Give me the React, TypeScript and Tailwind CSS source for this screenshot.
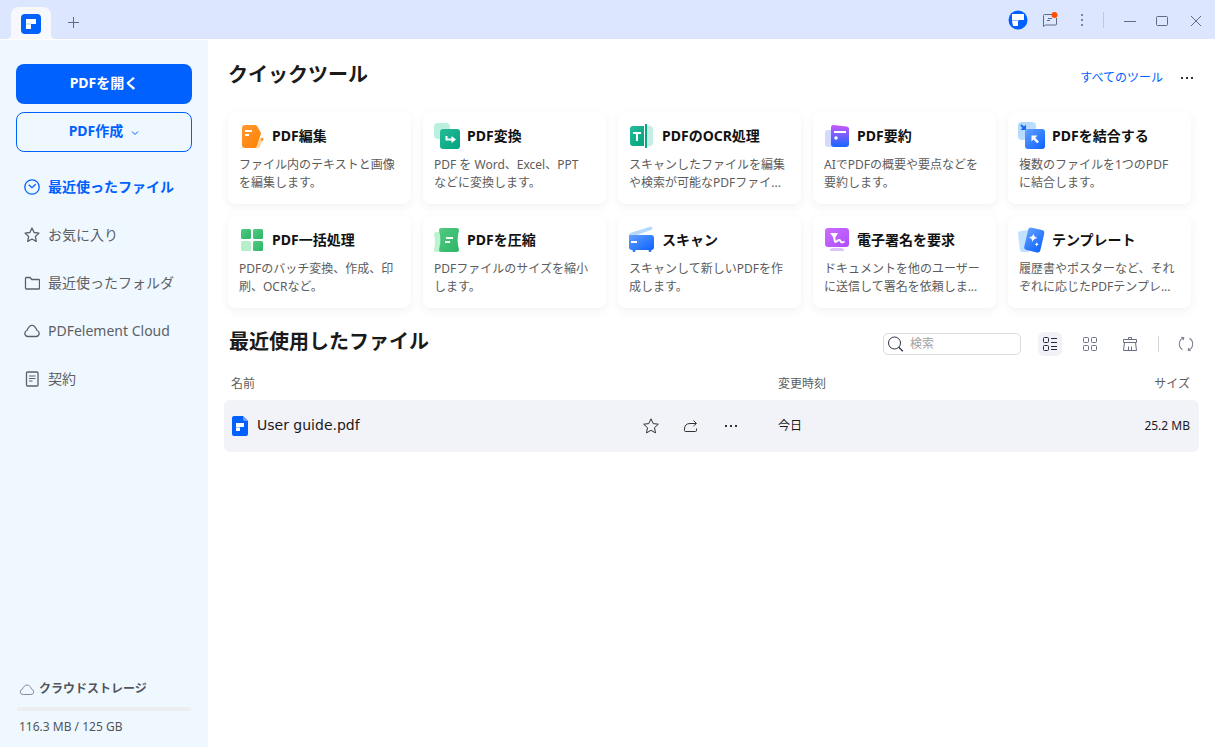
import type { ReactNode } from 'react';

const defs = (
  <svg width="0" height="0" className="absolute" aria-hidden="true">
    <defs>
      <linearGradient id="orange" x1="0" y1="0" x2="1" y2="1"><stop stopColor="#ff9a33" /><stop offset="1" stopColor="#ff8000" /></linearGradient>
      <linearGradient id="teal" x1="0" y1="0" x2="1" y2="1"><stop stopColor="#27bb98" /><stop offset="1" stopColor="#00a481" /></linearGradient>
      <linearGradient id="mint" x1="0" y1="0" x2="1" y2="1"><stop stopColor="#b5f0dc" /><stop offset="1" stopColor="#c4eee2" /></linearGradient>
      <linearGradient id="green" x1="0" y1="0" x2="1" y2="1"><stop stopColor="#4fcb81" /><stop offset="1" stopColor="#2eb568" /></linearGradient>
      <linearGradient id="blue" x1="0" y1="0" x2="1" y2="1"><stop stopColor="#63a0ff" /><stop offset="1" stopColor="#0a62ff" /></linearGradient>
      <linearGradient id="sky" x1="0" y1="0" x2="1" y2="1"><stop stopColor="#aed7fb" /><stop offset="1" stopColor="#c6e3ff" /></linearGradient>
      <linearGradient id="violet" x1="0" y1="0" x2="0" y2="1"><stop stopColor="#cb58fb" /><stop offset="1" stopColor="#1666ff" /></linearGradient>
      <linearGradient id="purple" x1="0" y1="0" x2="1" y2="1"><stop stopColor="#c96dff" /><stop offset="1" stopColor="#b14dfb" /></linearGradient>
    </defs>
  </svg>
);

const tools: { title: string; lines: [string, string]; icon: ReactNode }[] = [
  {
    title: 'PDF編集',
    lines: ['ファイル内のテキストと画像', 'を編集します。'],
    icon: (
      <>
        <path d="M22.500 15l2.500 1.200-4.500 9.300-3.500 1 .5-4z" fill="#ffd6a3" />
        <path d="M6 3h10c.8 0 1.500.4 2 1l3.700 6.500c.3.600.3 1.200.1 1.800L17.500 24.800c-.4.800-1 1.200-1.800 1.200H6a3 3 0 0 1-3-3V6a3 3 0 0 1 3-3z" fill="url(#orange)" />
        <circle cx="23" cy="17.500" r="1.300" fill="#ff8a12" />
        <path d="M6 9h7M6 13h4" stroke="#fff" strokeWidth="2" />
      </>
    ),
  },
  {
    title: 'PDF変換',
    lines: ['PDF を Word、Excel、PPT', 'などに変換します。'],
    icon: (
      <>
        <rect x="0" y="1" width="16" height="16" rx="4" fill="url(#mint)" />
        <rect x="6" y="7" width="20" height="20" rx="3" fill="url(#teal)" />
        <path d="M12.500 14v3.500h6" fill="none" stroke="#fff" strokeWidth="2" />
        <path d="M17.500 14l4.500 3.500-4.500 3.500z" fill="#fff" />
      </>
    ),
  },
  {
    title: 'PDFのOCR処理',
    lines: ['スキャンしたファイルを編集', 'や検索が可能なPDFファイ...'],
    icon: (
      <>
        <path d="M4 4h11v20H4a3 3 0 0 1-3-3V7a3 3 0 0 1 3-3z" fill="url(#teal)" />
        <path d="M18 4h3a3 3 0 0 1 3 3v14a3 3 0 0 1-3 3h-3z" fill="#c4eee2" />
        <path d="M15 3h1v22h-1z" fill="#fff" />
        <path d="M16 2h2v24h-2z" fill="#08a684" />
        <path d="M4 11h8M8 10v9" stroke="#fff" strokeWidth="2" />
      </>
    ),
  },
  {
    title: 'PDF要約',
    lines: ['AIでPDFの概要や要点などを', '要約します。'],
    icon: (
      <>
        <path d="M4 8h5v17H4a3 3 0 0 1-3-3V11a3 3 0 0 1 3-3z" fill="#d3daff" />
        <path d="M9.500 3l13 1.500C24 4.700 25 5.500 25 7v15a3 3 0 0 1-3 3H10a3 3 0 0 1-3-3V5.500C7 4 8 2.900 9.500 3z" fill="url(#violet)" />
        <path d="M10 10h12" stroke="#fff" strokeWidth="2" />
        <circle cx="12" cy="16" r="1.800" fill="#fff" />
      </>
    ),
  },
  {
    title: 'PDFを結合する',
    lines: ['複数のファイルを1つのPDF', 'に結合します。'],
    icon: (
      <>
        <rect x="-1" y="0" width="18" height="18" rx="4" fill="url(#sky)" />
        <path d="M2 3l4 4" stroke="#1769f5" strokeWidth="2" />
        <path d="M7 2.500V8H1.500z" fill="#1769f5" />
        <rect x="6" y="7" width="20" height="20" rx="3" fill="url(#blue)" />
        <path d="M14 15l5 5.500" stroke="#fff" strokeWidth="2.500" />
        <path d="M12.500 13.500h6l-6 6z" fill="#fff" />
      </>
    ),
  },
  {
    title: 'PDF一括処理',
    lines: ['PDFのバッチ変換、作成、印', '刷、OCRなど。'],
    icon: (
      <>
        <rect x="2" y="3" width="10" height="10" rx="1.500" fill="url(#green)" />
        <rect x="14" y="3" width="10" height="10" rx="1.500" fill="url(#green)" />
        <rect x="2" y="15" width="10" height="10" rx="1.500" fill="#b6f0ca" />
        <rect x="14" y="15" width="10" height="10" rx="1.500" fill="url(#green)" />
      </>
    ),
  },
  {
    title: 'PDFを圧縮',
    lines: ['PDFファイルのサイズを縮小', 'します。'],
    icon: (
      <>
        <path d="M2 6h6v20H2c-1.500 0-2.200-1-2-2.500 1.300-5 1.300-10 0-15C-.2 7 .5 6 2 6z" fill="#bff2d0" />
        <path d="M7.500 2h15c1.800 0 2.800 1.200 2.400 3-1.700 6-1.700 12 0 18 .4 1.800-.6 3-2.400 3h-15c-1.800 0-2.800-1.200-2.400-3 1.700-6 1.700-12 0-18C4.700 3.200 5.700 2 7.500 2z" fill="url(#green)" />
        <path d="M12 12h7M11 16h5" stroke="#fff" strokeWidth="2" />
      </>
    ),
  },
  {
    title: 'スキャン',
    lines: ['スキャンして新しいPDFを作', '成します。'],
    icon: (
      <>
        <path d="M0 10c0-2 .8-3 2.500-3.600L21 .8c1.300-.4 2 0 2.300.8.400 1-.1 1.900-1.300 2.300L5 10z" fill="#b6d8fb" />
        <path d="M3 22h4l-1 4H4zM19 22h4l-1 4h-2z" fill="#2c76f5" />
        <path d="M0 9h22a3 3 0 0 1 3 3v9a3 3 0 0 1-3 3H3a3 3 0 0 1-3-3z" fill="url(#blue)" />
        <path d="M2 16h6" stroke="#fff" strokeWidth="2" />
      </>
    ),
  },
  {
    title: '電子署名を要求',
    lines: ['ドキュメントを他のユーザー', 'に送信して署名を依頼しま...'],
    icon: (
      <>
        <path d="M8 22h10l2 1.500V25H6v-1.500z" fill="#dfc3fc" />
        <rect x="1" y="2" width="24" height="19" rx="3" fill="url(#purple)" />
        <path d="M6 7h8l-3.500 6z" fill="#fff" />
        <path d="M10 11l1 4.500c1.500 1.500 2.500-2 4.500-1.500 1.500.4 1 2.500 2.500 2.500 1 0 1.500-.7 2.500-.7" fill="none" stroke="#fff" strokeWidth="2" />
      </>
    ),
  },
  {
    title: 'テンプレート',
    lines: ['履歴書やポスターなど、それ', 'ぞれに応じたPDFテンプレ...'],
    icon: (
      <>
        <path d="M2 5l8-1v22H3.500c-1.500 0-2.400-.8-2.600-2.300L-1 8c-.2-1.600.8-2.800 3-3z" fill="#c2e1ff" />
        <rect x="7" y="2.500" width="16.500" height="23" rx="3" transform="rotate(13 15 14)" fill="url(#blue)" />
        <path d="M14.500 7.500c.4 2.600 1.400 3.800 4 4.500-2.800.4-4.200 1.300-5 4-.3-2.700-1.200-3.900-3.800-4.500 2.700-.4 4-1.400 4.800-4zM18 16c.1 1.400.7 2.100 2 2.500-1.400.2-2 .7-2.500 2-.2-1.400-.7-2-2-2.300 1.400-.2 2.100-.8 2.500-2.200z" fill="#fff" />
      </>
    ),
  },
];

const navItems: { label: string; active?: boolean; icon: ReactNode }[] = [
  {
    label: '最近使ったファイル',
    active: true,
    icon: <><circle cx="8" cy="8" r="7.200" /><path d="M4.700 5.700L8 8.700l3.700-3.400" /></>,
  },
  {
    label: 'お気に入り',
    icon: <path d="M8 1l2.100 4.500 4.900.6-3.600 3.400.9 4.900L8 12l-4.300 2.400.9-4.900L1 6.100l4.900-.6z" strokeLinejoin="round" />,
  },
  {
    label: '最近使ったフォルダ',
    icon: <path d="M2.400 2.500H6l1.800 2h6.800c.5 0 .9.400.9.900v7.700c0 .5-.4.900-.9.900H2.400c-.5 0-.9-.4-.9-.9V3.400c0-.5.400-.9.900-.9z" />,
  },
  {
    label: 'PDFelement Cloud',
    icon: <path d="M3.800 13.500h8.400a3.100 3.100 0 0 0 .9-6C12.200 5.300 10.500 2.300 8 2.300S3.800 5.300 2.900 7.500a3.100 3.100 0 0 0 .9 6z" />,
  },
  {
    label: '契約',
    icon: <><rect x="2.500" y="1" width="11.500" height="14" rx="1" /><path d="M5 5h6.500M5 7.500h6.500M5 10h3.500" strokeWidth="1" /></>,
  },
];

function Logo() {
  return (
    <svg width="20" height="20" viewBox="0 0 20 20">
      <rect width="20" height="20" rx="4" fill="#0061ff" />
      <path d="M5 5h10v5H5z" fill="#fff" />
      <path d="M5 9h5v6H5z" fill="#d5e4ff" />
      <path d="M5 11h5v4H5z" fill="#fff" />
    </svg>
  );
}

function Dots({ className }: { className?: string }) {
  return (
    <svg width="16" height="16" viewBox="0 0 16 16" className={className} fill="#333">
      <path d="M2 7h2v2H2zM7 7h2v2H7zM12 7h2v2h-2z" />
    </svg>
  );
}

function TitleBar() {
  return (
    <header className="flex h-[39px] shrink-0 items-end justify-between bg-[#dde6ff]">
      <div className="flex items-end pl-[7px]">
        <svg width="4" height="4" viewBox="0 0 4 4"><path d="M4 0v4H0c2 0 4-2 4-4z" fill="#f6f8fc" /></svg>
        <div className="flex h-8 w-10 items-center justify-center rounded-t-lg bg-[#f6f8fc] pt-0.5">
          <Logo />
        </div>
        <svg width="4" height="4" viewBox="0 0 4 4"><path d="M0 0v4h4C2 4 0 2 0 0z" fill="#f6f8fc" /></svg>
        <button type="button" aria-label="新しいタブ" className="flex h-[34px] w-9 items-center justify-center">
          <svg width="12" height="12" viewBox="0 0 12 12" stroke="#626b80" fill="none"><path d="M6.500 1v11M1 6.500h11" /></svg>
        </button>
      </div>
      <div className="flex h-[39px] items-center pr-[3px]">
        <button type="button" aria-label="アカウント" className="flex w-8 justify-center">
          <svg width="20" height="20" viewBox="0 0 20 20">
            <circle cx="10" cy="10" r="9.500" fill="#0061ff" />
            <path d="M4 4h12v6H4z" fill="#fff" />
            <path d="M4 10h7v1H4z" fill="#8fb8ff" />
            <path d="M4 11h6v5H5z" fill="#fff" />
          </svg>
        </button>
        <button type="button" aria-label="メッセージ" className="flex w-8 justify-center">
          <svg width="16" height="16" viewBox="0 0 16 16" fill="none" stroke="#626b80">
            <path d="M10.500 2.500h-8a1 1 0 0 0-1 1v11l2-1.500h10a1 1 0 0 0 1-1V6M6 6.500h4M5 8.500h3" />
            <circle cx="12.500" cy="3" r="3" fill="#ff4d00" stroke="none" />
          </svg>
        </button>
        <button type="button" aria-label="メニュー" className="flex w-8 justify-center">
          <svg width="16" height="16" viewBox="0 0 16 16" fill="#7d8496"><path d="M7 2h2v2H7zM7 7h2v2H7zM7 12h2v2H7z" /></svg>
        </button>
        <span className="mr-2.5 ml-[5px] h-4 w-px bg-[#c3c9d6]" />
        <button type="button" aria-label="最小化" className="flex w-8 justify-center">
          <svg width="16" height="16" viewBox="0 0 16 16" stroke="#626b80"><path d="M2 9.500h12" /></svg>
        </button>
        <button type="button" aria-label="最大化" className="flex w-8 justify-center">
          <svg width="16" height="16" viewBox="0 0 16 16" stroke="#626b80" fill="none"><rect x="2.500" y="4.500" width="11" height="9" rx="1" /></svg>
        </button>
        <button type="button" aria-label="閉じる" className="ml-0.5 flex w-8 justify-center">
          <svg width="16" height="16" viewBox="0 0 16 16" stroke="#626b80"><path d="M3 4l10 10M13 4L3 14" /></svg>
        </button>
      </div>
    </header>
  );
}

function Sidebar() {
  return (
    <aside className="flex w-52 shrink-0 flex-col bg-[#f0f8ff] px-4 pt-6 pb-2.5">
      <button type="button" className="h-10 rounded-lg bg-[#0061ff] pb-0.5 text-sm font-bold text-white">PDFを開く</button>
      <button type="button" className="mt-2 flex h-10 items-center justify-center gap-2 rounded-lg border border-[#0061ff] pb-0.5 text-sm font-bold text-[#0061ff]">
        PDF作成
        <svg width="8" height="8" viewBox="0 0 8 8" fill="none" stroke="#0061ff" className="mt-1"><path d="M1 2.500l3 3 3-3" /></svg>
      </button>
      <nav className="mt-[11px]">
        {navItems.map((item) => (
          <a
            key={item.label}
            href="#"
            className={
              item.active
                ? 'flex h-12 items-center gap-2 pl-2 text-sm font-bold whitespace-nowrap text-[#0061ff]'
                : 'flex h-12 items-center gap-2 pl-2 text-sm whitespace-nowrap text-[#5c6066]'
            }
          >
            <svg width="16" height="16" viewBox="0 0 16 16" fill="none" stroke="currentColor" strokeWidth="1.300">{item.icon}</svg>
            {item.label}
          </a>
        ))}
      </nav>
      <div className="mt-auto">
        <div className="flex items-center gap-1 pl-[3px] text-xs font-semibold text-[#50555c]">
          <svg width="16" height="16" viewBox="0 0 16 16" fill="none" stroke="#858b95">
            <path d="M4.200 13.500h7.600a2.700 2.700 0 0 0 .9-5.300C11.900 6.200 10.200 4 8 4S4.100 6.200 3.300 8.200a2.700 2.700 0 0 0 .9 5.300z" />
          </svg>
          クラウドストレージ
        </div>
        <div className="mx-px mt-2.5 h-1 rounded-full bg-[#ebedf0]" />
        <p className="mt-1.5 pl-[3px] text-xs leading-5 text-[#50555c]">116.3 MB / 125 GB</p>
      </div>
    </aside>
  );
}

function QuickTools() {
  return (
    <section className="pr-6 pl-5">
      <div className="flex h-7 items-center">
        <h2 className="pt-0.5 text-xl leading-7 font-bold text-[#1a1a1a]">クイックツール</h2>
        <a href="#" className="mt-2 ml-auto text-xs text-[#0061ff]">すべてのツール</a>
        <button type="button" aria-label="その他" className="-mr-1 mt-2 ml-4"><Dots /></button>
      </div>
      <div className="mt-6 grid grid-cols-5 gap-3">
        {tools.map((tool) => (
          <a key={tool.title} href="#" className="block h-[92px] rounded-lg bg-white px-[11px] pt-2.5 whitespace-nowrap shadow-[0_3px_8px_rgba(40,70,120,0.07)]">
            <div className="flex items-center gap-[5px]">
              <svg width="28" height="28" viewBox="0 0 28 28" className="shrink-0 overflow-visible">{tool.icon}</svg>
              <h3 className="text-sm leading-6 font-bold text-[#111]">{tool.title}</h3>
            </div>
            <p className="mt-1.5 text-xs leading-[18px] text-[#5c5c5c]">
              {tool.lines[0]}
              <br />
              {tool.lines[1]}
            </p>
          </a>
        ))}
      </div>
    </section>
  );
}

function Toolbar() {
  return (
    <div className="flex items-center">
      <label className="flex h-[22px] w-[138px] items-center gap-1.5 rounded-[5px] border border-[#dcdcdf] pl-1">
        <svg width="16" height="16" viewBox="0 0 16 16" fill="none" stroke="#2f3347" className="shrink-0">
          <circle cx="6.500" cy="7" r="6" /><path d="M10.800 11.300l4 4" strokeWidth="1.300" />
        </svg>
        <input type="text" placeholder="検索" aria-label="検索" className="w-full min-w-0 bg-transparent text-xs outline-none placeholder:text-[#a3a3a3]" />
      </label>
      <button type="button" aria-label="リスト表示" className="ml-[17px] flex size-6 items-center justify-center rounded-md bg-[#f1f2f7]">
        <svg width="16" height="16" viewBox="0 0 16 16" fill="none" stroke="#23283a">
          <rect x="1.500" y="1.500" width="5" height="5" rx="1" /><rect x="1.500" y="9.500" width="5" height="5" rx="1" />
          <path d="M9 2.500h6M9 6.500h6M9 10.500h6M9 13.500h6" />
        </svg>
      </button>
      <button type="button" aria-label="グリッド表示" className="ml-4 flex size-6 items-center justify-center">
        <svg width="16" height="16" viewBox="0 0 16 16" fill="none" stroke="#686d80">
          <rect x="1.500" y="1.500" width="5" height="5" rx="1" /><rect x="9.500" y="1.500" width="5" height="5" rx="1" />
          <rect x="1.500" y="9.500" width="5" height="5" rx="1" /><rect x="9.500" y="9.500" width="5" height="5" rx="1" />
        </svg>
      </button>
      <button type="button" aria-label="履歴を消去" className="ml-4 flex size-6 items-center justify-center">
        <svg width="16" height="16" viewBox="0 0 16 16" fill="none" stroke="#686d80">
          <path d="M6.500 3V1.500h3V3M1.500 6.500v-3h13v3zM2.500 6.500l-1 8h13l-1-8M6.500 14.500v-4M9.500 14.500v-4" />
        </svg>
      </button>
      <span className="ml-4 h-4 w-px bg-[#d5d6db]" />
      <button type="button" aria-label="更新" className="ml-[15px] flex size-6 items-center justify-center">
        <svg width="16" height="16" viewBox="0 0 16 16" fill="none" stroke="#7b8090" strokeWidth="1.100">
          <path d="M5.800 1.700A6.700 6.700 0 0 0 4.500 13.700M10.200 14.300A6.700 6.700 0 0 0 11.500 2.300M3.200 1.200l2.600.5-.7 2.300M12.800 14.800l-2.600-.5.700-2.300" />
        </svg>
      </button>
    </div>
  );
}

function RecentFiles() {
  return (
    <section className="mt-6 px-4">
      <div className="flex h-6 items-start justify-between pr-px pl-[5px]">
        <h2 className="text-xl leading-5 font-bold text-[#1a1a1a]">最近使用したファイル</h2>
        <Toolbar />
      </div>
      <table className="mt-3 w-full table-fixed border-separate border-spacing-0 text-xs">
        <colgroup>
          <col />
          <col className="w-60" />
          <col className="w-[181px]" />
        </colgroup>
        <thead>
          <tr className="h-8 text-[#5c5c5c]">
            <th className="pl-[7px] text-left font-normal">名前</th>
            <th className="text-left font-normal">変更時刻</th>
            <th className="pr-[9px] text-right font-normal">サイズ</th>
          </tr>
        </thead>
        <tbody>
          <tr className="h-[52px] bg-[#f2f3f8] text-[#1a1a1a]">
            <td className="rounded-l-md pl-2">
              <div className="flex items-center">
                <svg width="16" height="20" viewBox="0 0 16 20">
                  <path d="M2 0h9l5 5v13a2 2 0 0 1-2 2H2a2 2 0 0 1-2-2V2a2 2 0 0 1 2-2z" fill="#0061ff" />
                  <path d="M11 0l5 5h-3a2 2 0 0 1-2-2z" fill="#69a3ff" />
                  <path d="M4 7h8v4H8v4H4z" fill="#fff" />
                  <path d="M4 11h4v1H4z" fill="#9cc2ff" />
                </svg>
                <a href="#" className="ml-[9px] pb-0.5 font-['DejaVu_Sans',sans-serif] text-sm">User guide.pdf</a>
                <div className="mr-[39px] ml-auto flex gap-6">
                  <button type="button" aria-label="お気に入り">
                    <svg width="16" height="16" viewBox="0 0 16 16" fill="none" stroke="#333" strokeLinejoin="round"><path d="M8 .8l2.200 4.800 5.100.6-3.800 3.500 1 5.200L8 12.300l-4.500 2.600 1-5.200L.7 6.200l5.100-.6z" /></svg>
                  </button>
                  <button type="button" aria-label="共有">
                    <svg width="16" height="16" viewBox="0 0 16 16" fill="none" stroke="#333"><path d="M13.500 10.500v2a1 1 0 0 1-1 1h-10a1 1 0 0 1-1-1V11c0-3.500 2-5.500 5.500-5.500h6M10.500 2.500l3 3-3 2.500" /></svg>
                  </button>
                  <button type="button" aria-label="その他の操作"><Dots /></button>
                </div>
              </div>
            </td>
            <td>今日</td>
            <td className="rounded-r-md pr-[9px] text-right">25.2 MB</td>
          </tr>
        </tbody>
      </table>
    </section>
  );
}

export default function App() {
  return (
    <div lang="ja" className="flex min-h-screen flex-col bg-white font-['Noto_Sans','Noto_Sans_CJK_JP',sans-serif]">
      {defs}
      <TitleBar />
      <div className="mt-px flex flex-1">
        <Sidebar />
        <main className="min-w-0 flex-1 pt-5">
          <QuickTools />
          <RecentFiles />
        </main>
      </div>
    </div>
  );
}
